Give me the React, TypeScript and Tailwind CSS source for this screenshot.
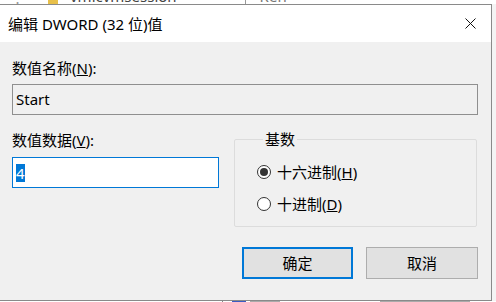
import React from "react";

const font = { fontFamily: "'Noto Sans','Noto Sans CJK SC',sans-serif" };

function Radio({ checked, label, mnemonic }: { checked: boolean; label: string; mnemonic: string }) {
  return (
    <div className="flex h-[20px] items-center">
      <span className="flex h-[14px] w-[14px] items-center justify-center rounded-full border border-[#333333] bg-white">
        {checked && <span className="h-[8px] w-[8px] rounded-full bg-[#333333]" />}
      </span>
      <span className="ml-[6px] text-[15px] leading-[20px] text-black">
        {label}(<span className="underline">{mnemonic}</span>)
      </span>
    </div>
  );
}

export default function App() {
  return (
    <div className="flex h-[302px] w-[496px] flex-col overflow-hidden bg-white" style={font}>
      {/* background strip above dialog */}
      <div className="relative h-[4px] overflow-hidden bg-white">
        <div className="-mt-[12px] flex items-end gap-2 pl-[10px] text-[15px] leading-[16px] text-[#444]">
          <span className="w-[30px] text-[#999]">⋮</span>
          <span className="h-[14px] w-[10px] bg-[#e8c04a]" />
          <span className="ml-[4px]">vmicvmsession</span>
          <span className="ml-[60px] h-[16px] w-[1px] bg-[#999]" />
          <span className="ml-[6px] text-[#777]">Ren</span>
        </div>
      </div>
      <div className="flex h-[297px]">
        {/* dialog */}
        <div className="flex w-[492px] flex-col border-b border-r border-t border-[#8a8a8a]">
          <div className="flex h-[37px] items-center justify-between bg-white pl-[8px] pr-[15px]">
            <span className="text-[15px] leading-[20px] text-black">编辑 DWORD (32 位)值</span>
            <svg width="11" height="11" viewBox="0 0 11 11">
              <path d="M0.5 0.5 L10.5 10.5 M10.5 0.5 L0.5 10.5" stroke="#111" strokeWidth="1" fill="none" />
            </svg>
          </div>
          <div className="flex flex-1 flex-col bg-[#f0f0f0] pl-[12px] pr-[13px] pt-[16px]">
            <div className="text-[15px] leading-[20px] text-black">
              数值名称(<span className="underline">N</span>):
            </div>
            <div className="mt-[6px] flex h-[31px] items-center border border-[#8f8f8f] bg-[#f0f0f0] pl-[3px] text-[15px] text-black">
              Start
            </div>
            <div className="mt-[15px] flex">
              <div className="flex w-[207px] flex-col">
                <div className="text-[15px] leading-[20px] text-black">
                  数值数据(<span className="underline">V</span>):
                </div>
                <div className="mt-[7px] flex h-[31px] items-center border border-[#0078d7] bg-white pl-[3px]">
                  <span className="bg-[#0078d7] text-[15px] leading-[18px] text-white">4</span>
                </div>
              </div>
              <fieldset className="-mt-[1px] ml-[15px] w-[243px] rounded-[2px] border border-[#dcdcdc] pb-[12px] pl-[22px]">
                <legend className="ml-[6px] px-[2px] text-[15px] leading-[20px] text-black">基数</legend>
                <div className="mt-[13px]">
                  <Radio checked label="十六进制" mnemonic="H" />
                </div>
                <div className="mt-[12px]">
                  <Radio checked={false} label="十进制" mnemonic="D" />
                </div>
              </fieldset>
            </div>
            <div className="mt-[20px] flex justify-end gap-[13px]">
              <button className="h-[32px] w-[111px] border-2 border-[#0078d7] bg-[#e1e1e1] text-[15px] text-black">
                确定
              </button>
              <button className="h-[32px] w-[112px] border border-[#adadad] bg-[#e1e1e1] text-[15px] text-black">
                取消
              </button>
            </div>
          </div>
        </div>
        {/* right background strip */}
        <div className="flex-1 bg-[#f4f4f4]" />
      </div>
      <div className="relative h-[1px] overflow-hidden bg-white">
        <div className="flex pl-[222px]">
          <span className="h-[1px] w-[1px] bg-[#888]" />
          <span className="ml-[9px] h-[1px] w-[14px] bg-[#3b5cc4]" />
          <span className="ml-[4px] h-[1px] w-[30px] bg-[#aaa]" />
          <span className="ml-[100px] h-[1px] w-[90px] bg-[#aaa]" />
        </div>
      </div>
    </div>
  );
}
